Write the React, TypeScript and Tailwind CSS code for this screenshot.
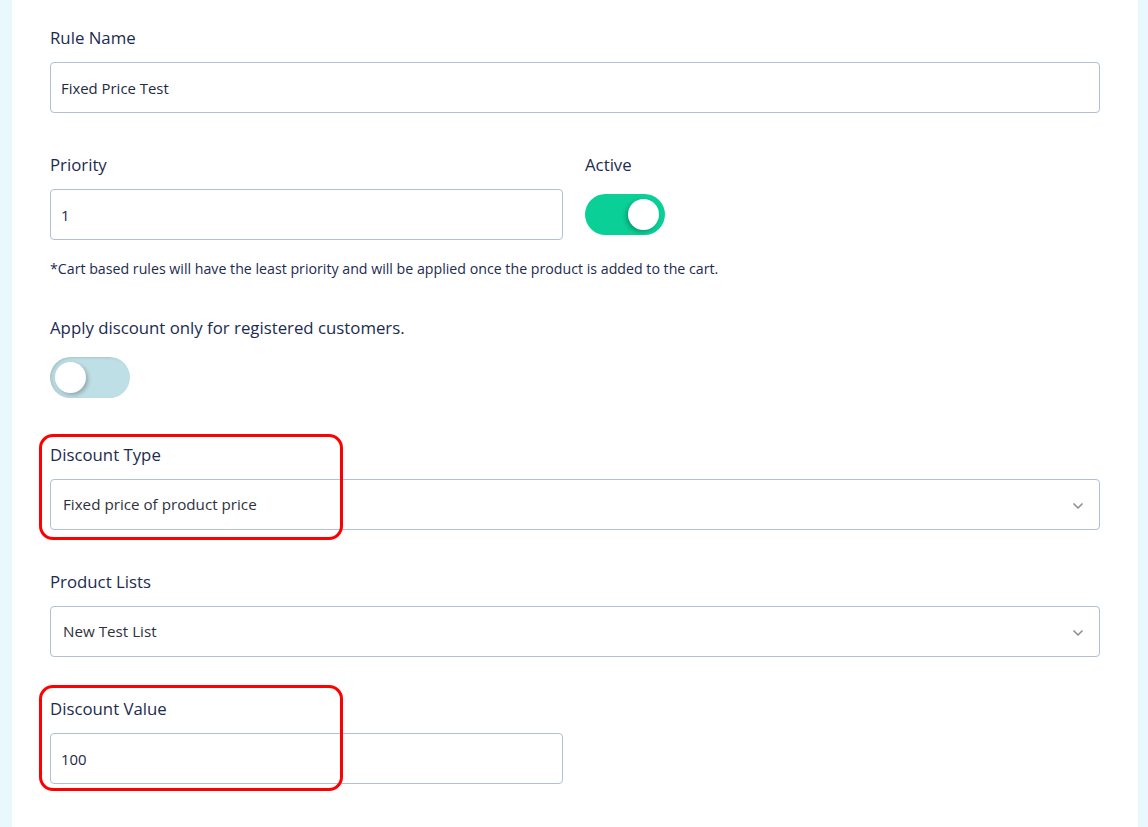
import React, { useState } from 'react';
import { ChevronDown } from 'lucide-react';

const font = { fontFamily: '"Open Sans", "Noto Sans", Arial, sans-serif' };

const Toggle = ({ on, onClick }: { on: boolean; onClick: () => void }) => (
  <button
    onClick={onClick}
    className={
      on
        ? 'relative w-[80px] h-[41px] rounded-full bg-[#0acf97]'
        : 'relative w-[80px] h-[41px] rounded-full bg-[#bfdfe6] shadow-[inset_2px_1px_3px_rgba(0,0,0,0.12)]'
    }
  >
    <span
      className={
        on
          ? 'absolute top-[5px] right-[6px] w-[31px] h-[31px] rounded-full bg-white shadow-[-2px_2px_4px_rgba(0,0,0,0.25)]'
          : 'absolute top-[5px] left-[5px] w-[31px] h-[31px] rounded-full bg-white shadow-[2px_2px_4px_rgba(0,0,0,0.25)]'
      }
    />
  </button>
);

const Label = ({ children }: { children: React.ReactNode }) => (
  <div className="text-[16.8px] leading-[24px] text-[#1c2b4f] mb-[12px]">{children}</div>
);

const inputCls =
  'w-full h-[51px] rounded-[4px] border border-[#b3bfd4] bg-white px-[10px] text-[14.9px] text-[#1f2a44] outline-none';

const Select = ({ value }: { value: string }) => (
  <div className="relative">
    <div className="w-full h-[51px] rounded-[4px] border border-[#b3bfd4] bg-white pl-[12px] pr-[30px] flex items-center text-[15.2px] text-[#2e323c]">
      {value}
    </div>
    <ChevronDown size={16} strokeWidth={2.5} className="absolute right-[14px] top-[19px] text-[#8a8f98]" />
  </div>
);

// annotation frames drawn over the fields
export default function App() {
  const [active, setActive] = useState(true);
  const [registered, setRegistered] = useState(false);

  return (
    <div className="min-h-screen bg-[#e9f8fd] px-[12px] overflow-hidden" style={font}>
      <div className="bg-white min-h-[827px] w-[1126px] px-[38px] pt-[26px]">
        <div>
          <Label>Rule Name</Label>
          <input className={inputCls} defaultValue="Fixed Price Test" />
        </div>

        <div className="grid grid-cols-[513px_1fr] gap-x-[22px] mt-[40px]">
          <div>
            <Label>Priority</Label>
            <input className={inputCls} defaultValue="1" />
          </div>
          <div>
            <Label>Active</Label>
            <div className="pt-[5px]">
              <Toggle on={active} onClick={() => setActive(!active)} />
            </div>
          </div>
        </div>

        <p className="mt-[18px] text-[14.2px] leading-[20px] text-[#1c2b4f]">
          *Cart based rules will have the least priority and will be applied once the product is added to the cart.
        </p>

        <div className="mt-[37px]">
          <Label>Apply discount only for registered customers.</Label>
          <div className="pt-[5px]">
            <Toggle on={registered} onClick={() => setRegistered(!registered)} />
          </div>
        </div>

        <div className="relative mt-[39px]">
          <div className="absolute z-10 left-[-11px] top-[-9px] w-[304px] h-[106px] rounded-[14px] border-[3px] border-[#ff0000] pointer-events-none" />
          <Label>Discount Type</Label>
          <Select value="Fixed price of product price" />
        </div>

        <div className="mt-[40px]">
          <Label>Product Lists</Label>
          <Select value="New Test List" />
        </div>

        <div className="relative mt-[40px] w-[513px]">
          <div className="absolute z-10 left-[-11px] top-[-12px] w-[304px] h-[106px] rounded-[14px] border-[3px] border-[#ff0000] pointer-events-none" />
          <Label>Discount Value</Label>
          <input className={inputCls} defaultValue="100" />
        </div>
      </div>
    </div>
  );
}
